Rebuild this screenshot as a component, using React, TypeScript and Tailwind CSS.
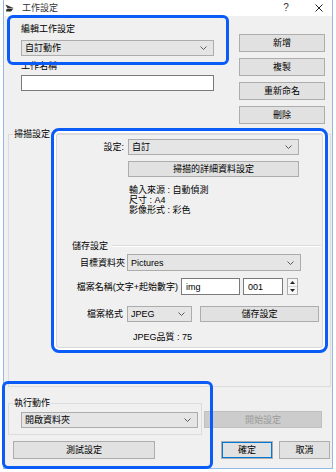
import React from "react"

const font = { fontFamily: '"Liberation Sans", "Noto Sans CJK TC", sans-serif' }

function Chevron() {
  return (
    <svg width="7" height="4" viewBox="0 0 7 4" className="shrink-0">
      <polyline points="0.5,0.5 3.5,3.5 6.5,0.5" fill="none" stroke="#5a5a5a" strokeWidth="1" />
    </svg>
  )
}

function Combo({ value, className }: { value: string; className: string }) {
  return (
    <div
      className={`flex items-center justify-between bg-[#e5e5e5] border border-[#acacac] pl-[3px] pr-[6px] leading-[10px] ${className}`}
    >
      <span>{value}</span>
      <Chevron />
    </div>
  )
}

function Btn({ label, className }: { label: string; className: string }) {
  return (
    <div
      className={`flex items-center justify-center bg-[#e1e1e1] border border-[#adadad] leading-[10px] ${className}`}
    >
      {label}
    </div>
  )
}

function Field({ value, className }: { value?: string; className: string }) {
  return (
    <div className={`flex items-center bg-white border border-[#7a7a7a] pl-[4px] leading-[10px] ${className}`}>
      {value}
    </div>
  )
}

export default function App() {
  return (
    <div className="relative w-[336px] h-[472px] bg-white overflow-hidden text-[9px] text-black" style={font}>
      {/* dialog window */}
      <div className="ml-[3px] w-[330px] h-[469px] border-x border-b border-[#92b9e6] bg-[#f0f0f0] flex flex-col">
        {/* title bar */}
        <div className="h-[16px] bg-white flex items-center pl-[1px]">
          <svg width="9" height="8" viewBox="0 0 9 8" className="shrink-0">
            <path d="M0.5 0.5 L8.5 4 L2.5 4.5 Z" fill="#3a3a3a" />
            <path d="M1.5 5 L8.5 4.6 L6 7.5 L1 7.5 Z" fill="#2b2b2b" />
          </svg>
          <span className="ml-[8px] leading-[10px] text-[#333]">工作設定</span>
          <div className="flex-1" />
          <span className="w-[12px] text-center text-[10px] leading-[10px] text-[#333]">?</span>
          <svg width="12" height="8" viewBox="0 0 12 8" className="ml-[21px] mr-[7px]">
            <path d="M2.5 0.5 L9.5 7.5 M9.5 0.5 L2.5 7.5" stroke="#222" strokeWidth="1" />
          </svg>
        </div>

        {/* job selection + side buttons */}
        <div className="flex pt-[8px]">
          <div className="ml-[17px] w-[193px] flex flex-col">
            <div className="h-[10px] leading-[10px]">編輯工作設定</div>
            <Combo value="自訂動作" className="mt-[6px] w-[193px] h-[16px]" />
            <div className="mt-[5px] h-[10px] leading-[10px]">工作名稱</div>
            <Field className="mt-[4px] w-[193px] h-[16px]" />
          </div>
          <div className="ml-[25px] mt-[10px] w-[86px] flex flex-col gap-[6px]">
            <Btn label="新增" className="h-[18px]" />
            <Btn label="複製" className="h-[18px]" />
            <Btn label="重新命名" className="h-[18px]" />
            <Btn label="刪除" className="h-[18px]" />
          </div>
        </div>

        {/* scan settings group */}
        <fieldset className="mt-[5px] ml-[4px] w-[323px] border border-[#dcdcdc] pb-[44px]">
          <legend className="ml-[4px] px-[1px] h-[10px] leading-[10px]">掃描設定</legend>
          <div className="flex items-center">
            <div className="w-[115px] text-right leading-[10px]">設定:</div>
            <Combo value="自訂" className="ml-[4px] w-[171px] h-[16px]" />
          </div>
          <Btn label="掃描的詳細資料設定" className="ml-[119px] mt-[6px] w-[171px] h-[16px]" />
          <div className="ml-[120px] mt-[8px] leading-[10px]">
            <div>輸入來源 : 自動偵測</div>
            <div>尺寸 : A4</div>
            <div>影像形式 : 彩色</div>
          </div>

          <div className="mt-[26px] ml-[63px] mr-[9px] flex items-center">
            <span className="h-[10px] leading-[10px]">儲存設定</span>
            <div className="ml-[4px] flex-1 h-[2px] border-t border-[#dcdcdc] border-b border-b-white" />
          </div>
          <div className="mt-[3px] flex items-center">
            <div className="w-[116px] text-right leading-[10px]">目標資料夾</div>
            <Combo value="Pictures" className="ml-[2px] w-[174px] h-[17px]" />
          </div>
          <div className="mt-[7px] flex items-center">
            <div className="w-[169px] text-right leading-[10px]">檔案名稱(文字+起始數字)</div>
            <Field value="img" className="ml-[3px] w-[59px] h-[17px]" />
            <Field value="001" className="ml-[3px] w-[40px] h-[17px] pl-[2px]" />
            <div className="ml-[4px] w-[11px] h-[17px] flex flex-col border border-[#acacac] bg-[#f7f7f7]">
              <div className="flex-1 flex items-center justify-center border-b border-[#d4d4d4]">
                <svg width="5" height="3" viewBox="0 0 5 3">
                  <path d="M0 3 L2.5 0 L5 3 Z" fill="#222" />
                </svg>
              </div>
              <div className="flex-1 flex items-center justify-center">
                <svg width="5" height="3" viewBox="0 0 5 3">
                  <path d="M0 0 L2.5 3 L5 0 Z" fill="#222" />
                </svg>
              </div>
            </div>
          </div>
          <div className="mt-[11px] flex items-center">
            <div className="w-[114px] text-right leading-[10px]">檔案格式</div>
            <Combo value="JPEG" className="ml-[4px] w-[65px] h-[16px]" />
            <Btn label="儲存設定" className="ml-[8px] w-[119px] h-[16px]" />
          </div>
          <div className="mt-[10px] ml-[124px] leading-[10px]">JPEG品質 : 75</div>
        </fieldset>

        {/* run action */}
        <div className="mt-[11px] ml-[4px] flex items-end">
          <fieldset className="w-[194px] border border-[#dcdcdc]">
            <legend className="ml-[4px] px-[1px] h-[10px] leading-[10px]">執行動作</legend>
            <Combo value="開啟資料夾" className="ml-[12px] mt-[4px] mb-[6px] w-[177px] h-[16px]" />
          </fieldset>
          <div className="ml-[2px] mb-[7px] w-[118px] h-[17px] flex items-center justify-center bg-[#cccccc] border border-[#bfbfbf] text-[#9a9a9a] leading-[10px]">
            開始設定
          </div>
        </div>

        {/* dialog buttons */}
        <div className="mt-[6px] flex">
          <Btn label="測試設定" className="ml-[9px] w-[142px] h-[18px]" />
          <Btn
            label="確定"
            className="ml-[66px] w-[52px] h-[18px] border-[#0078d7] shadow-[inset_0_0_0_1px_#0078d7]"
          />
          <Btn label="取消" className="ml-[6px] w-[51px] h-[18px]" />
        </div>
      </div>

      {/* blue callout frames */}
      <div className="absolute left-[7px] top-[15px] w-[222px] h-[50px] border-[3px] border-[#0b5cf7] rounded-[6px]" />
      <div className="absolute left-[51px] top-[128px] w-[277px] h-[225px] border-[3px] border-[#0b5cf7] rounded-[8px] shadow-[inset_0_0_0_2px_#ffffff,inset_0_0_0_3px_#d9d9d9]" />
      <div className="absolute left-[2px] top-[381px] w-[211px] h-[88px] border-[3px] border-[#0b5cf7] rounded-[6px]" />
    </div>
  )
}
